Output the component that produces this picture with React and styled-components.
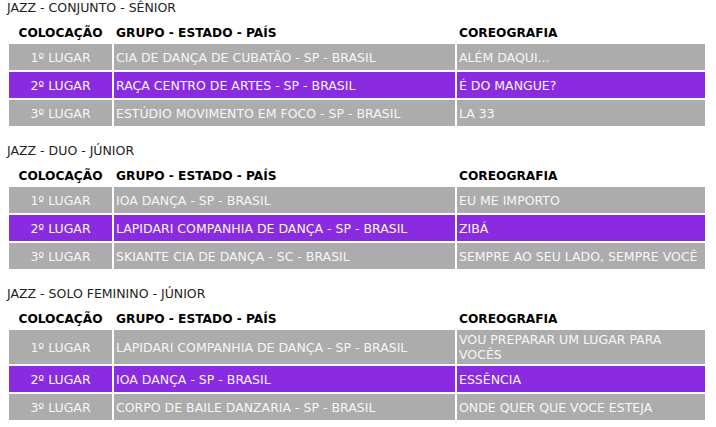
import React from "react";
import styled, {createGlobalStyle} from "styled-components";

const Global = createGlobalStyle`
  html, body {
    margin: 0;
    padding: 0;
    background: #fff;
  }
  body {
    font-family: "DejaVu Sans", Verdana, sans-serif;
    font-size: 12.5px;
  }
`;

const Page = styled.div`
  width: 716px;
  padding: 0 0 0 7px;
  box-sizing: border-box;
  display: flex;
  flex-direction: column;
  gap: 17px;
`;

const Section = styled.section`
  display: flex;
  flex-direction: column;
`;

const Title = styled.div`
  height: 16px;
  line-height: 16px;
  color: #222;
  text-transform: uppercase;
`;

const Grid = styled.div`
  display: grid;
  grid-template-columns: 103px 341px 248px;
  gap: 2px;
  margin: 4px 0 0 2px;
`;

const Head = styled.div`
  height: 22px;
  padding: 5px 2px 0;
  box-sizing: border-box;
  line-height: 16px;
  font-size: 12.2px;
  font-weight: bold;
  color: #000;
  text-align: ${p => (p.$center ? "center" : "left")};
`;

const Cell = styled.div`
  min-height: 26px;
  padding: 2px 2px;
  box-sizing: border-box;
  display: flex;
  align-items: center;
  justify-content: ${p => (p.$center ? "center" : "flex-start")};
  line-height: 15px;
  color: #f6f6f6;
  background: ${p => (p.$hl ? "#8a2be2" : "#acacac")};
`;

const data = [
  {
    title: "JAZZ - CONJUNTO - SÊNIOR",
    rows: [
      ["CIA DE DANÇA DE CUBATÃO - SP - BRASIL", "ALÉM DAQUI..."],
      ["RAÇA CENTRO DE ARTES - SP - BRASIL", "É DO MANGUE?"],
      ["ESTÚDIO MOVIMENTO EM FOCO - SP - BRASIL", "LA 33"],
    ],
  },
  {
    title: "JAZZ - DUO - JÚNIOR",
    rows: [
      ["IOA DANÇA - SP - BRASIL", "EU ME IMPORTO"],
      ["LAPIDARI COMPANHIA DE DANÇA - SP - BRASIL", "ZIBÁ"],
      ["SKIANTE CIA DE DANÇA - SC - BRASIL", "SEMPRE AO SEU LADO, SEMPRE VOCÊ"],
    ],
  },
  {
    title: "JAZZ - SOLO FEMININO - JÚNIOR",
    rows: [
      ["LAPIDARI COMPANHIA DE DANÇA - SP - BRASIL", "VOU PREPARAR UM LUGAR PARA VOCÊS"],
      ["IOA DANÇA - SP - BRASIL", "ESSÊNCIA"],
      ["CORPO DE BAILE DANZARIA - SP - BRASIL", "ONDE QUER QUE VOCE ESTEJA"],
    ],
  },
];

export default function App() {
  return <>
    <Global/>
    <Page>
      {data.map(section => (
        <Section key={section.title}>
          <Title>{section.title}</Title>
          <Grid>
            <Head $center>COLOCAÇÃO</Head>
            <Head>GRUPO - ESTADO - PAÍS</Head>
            <Head>COREOGRAFIA</Head>
            {section.rows.map((row, i) => (
              <React.Fragment key={i}>
                <Cell $center $hl={i === 1}>{i + 1}º LUGAR</Cell>
                <Cell $hl={i === 1}>{row[0]}</Cell>
                <Cell $hl={i === 1}>{row[1]}</Cell>
              </React.Fragment>
            ))}
          </Grid>
        </Section>
      ))}
    </Page>
  </>;
}
